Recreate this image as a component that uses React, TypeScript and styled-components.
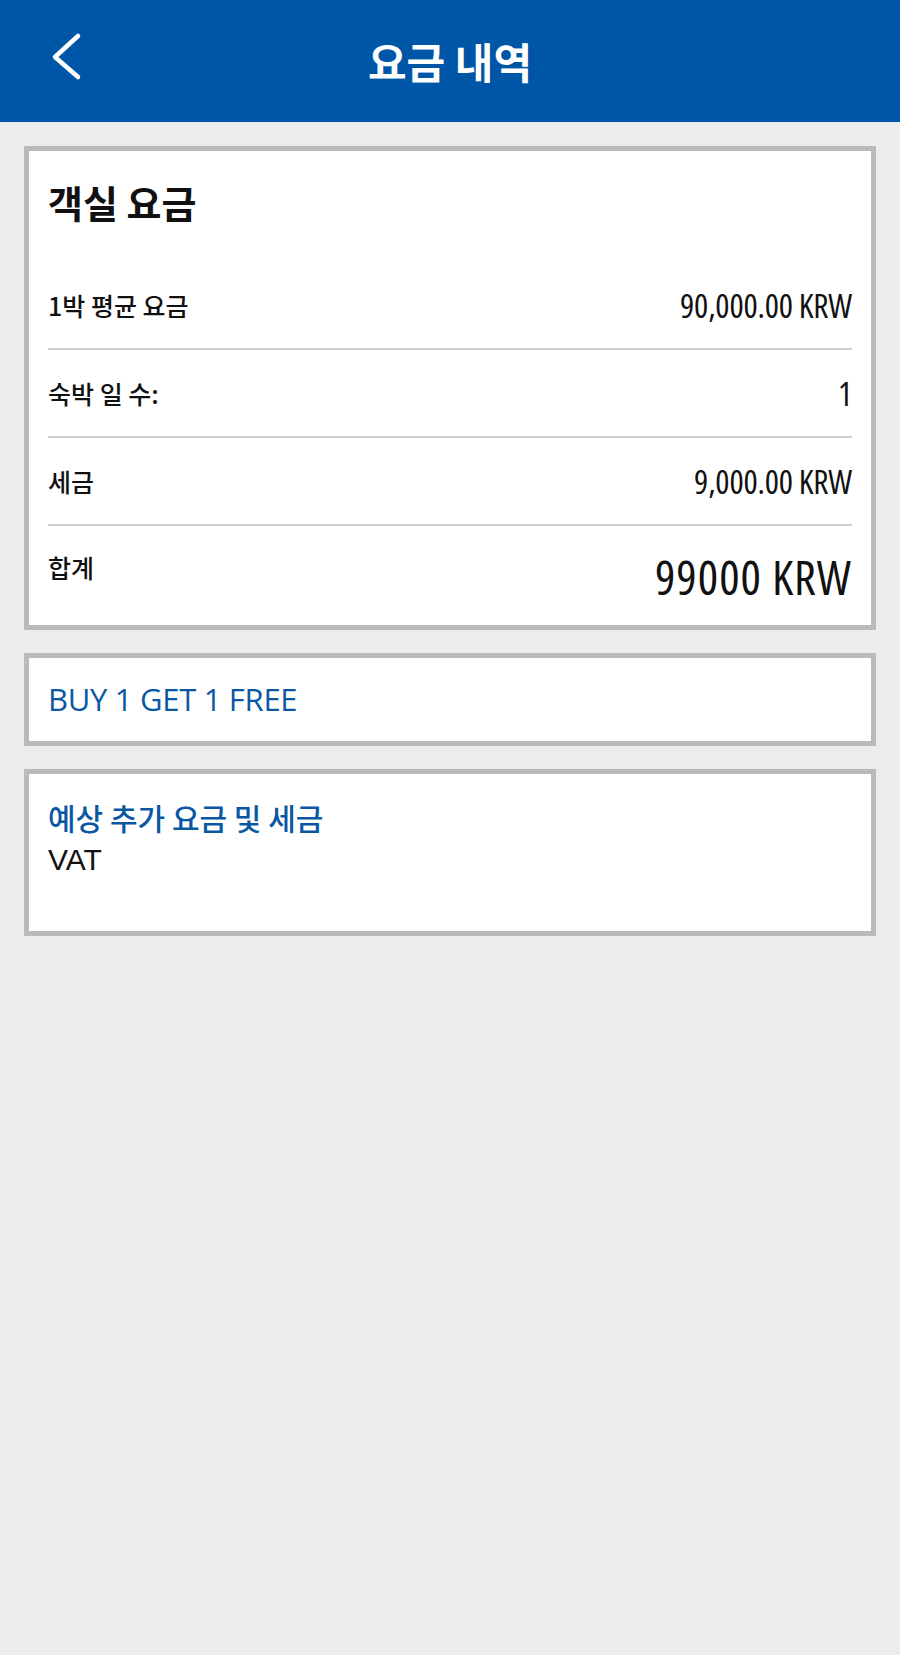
import React from "react";
import styled, { createGlobalStyle } from "styled-components";

const GlobalStyle = createGlobalStyle`
  html, body {
    margin: 0;
    padding: 0;
    background: #ececec;
  }
  body {
    font-family: "Noto Sans CJK KR", "Liberation Sans", sans-serif;
    -webkit-font-smoothing: antialiased;
  }
  * { box-sizing: border-box; }
`;

const Page = styled.div`
  min-height: 1655px;
  background: #ececec;
  display: flex;
  flex-direction: column;
`;

const Header = styled.header`
  height: 122px;
  background: #0056a6;
  display: grid;
  grid-template-columns: 1fr auto 1fr;
  align-items: center;
`;

const BackButton = styled.button`
  justify-self: start;
  align-self: start;
  margin: 32px 0 0 48px;
  padding: 0;
  border: 0;
  background: none;
  width: 34px;
  height: 50px;
  display: flex;
  cursor: pointer;
`;

const HeaderTitle = styled.h1`
  margin: 0;
  font-family: "Noto Sans CJK KR", sans-serif;
  font-size: 42px;
  font-weight: 700;
  line-height: 1.2;
  color: #ffffff;
`;

const Content = styled.main`
  padding: 24px;
  display: flex;
  flex-direction: column;
  gap: 23px;
`;

const Card = styled.section`
  background: #ffffff;
  border: 5px solid #bababa;
  padding: 0 19px;
`;

const CardTitle = styled.h2`
  margin: 0;
  padding-top: 30px;
  margin-bottom: 39px;
  font-family: "Noto Sans CJK KR", sans-serif;
  font-size: 38px;
  font-weight: 700;
  line-height: 42px;
  color: #111111;
`;

const Row = styled.div<{ $total?: boolean }>`
  display: flex;
  justify-content: space-between;
  align-items: ${(p) => (p.$total ? "flex-start" : "center")};
  height: ${(p) => (p.$total ? "99px" : "88px")};
  padding-top: ${(p) => (p.$total ? "26px" : "0")};
  border-bottom: ${(p) => (p.$total ? "none" : "2px solid #cfcfcf")};
`;

const Label = styled.span`
  font-family: "Noto Sans CJK KR", sans-serif;
  font-size: 25px;
  font-weight: 500;
  line-height: 1.2;
  color: #111111;
`;

const Value = styled.span<{ $big?: boolean }>`
  font-family: "Open Sans", "Liberation Sans", sans-serif;
  font-stretch: 75%;
  font-size: ${(p) => (p.$big ? "48px" : "33.5px")};
  line-height: ${(p) => (p.$big ? "50px" : "38px")};
  letter-spacing: ${(p) => (p.$big ? "1px" : "-0.2px")};
  color: #111111;
`;

const PromoCard = styled(Card)`
  padding: 22px 19px;
`;

const PromoText = styled.div`
  font-family: "Open Sans", "Liberation Sans", sans-serif;
  font-size: 31px;
  font-weight: 500;
  line-height: 39px;
  letter-spacing: -0.3px;
  color: #0a58a3;
`;

const ExtraCard = styled(Card)`
  padding: 26px 19px 55px;
`;

const ExtraTitle = styled.h3`
  margin: 0 0 10px;
  font-family: "Noto Sans CJK KR", sans-serif;
  font-size: 30px;
  font-weight: 500;
  line-height: 34px;
  color: #0a58a3;
`;

const ExtraText = styled.div`
  font-family: "Liberation Sans", sans-serif;
  font-size: 30px;
  line-height: 32px;
  color: #111111;
`;

const rows = [
  { label: "1박 평균 요금", value: "90,000.00 KRW" },
  { label: "숙박 일 수:", value: "1" },
  { label: "세금", value: "9,000.00 KRW" },
];

export default function App() {
  return (
    <Page>
      <GlobalStyle />
      <Header>
        <BackButton aria-label="뒤로">
          <svg width="34" height="50" viewBox="0 0 34 50" fill="none">
            <path
              d="M30 4 L7 25 L30 45"
              stroke="#ffffff"
              strokeWidth="4.5"
              strokeLinecap="round"
              strokeLinejoin="round"
            />
          </svg>
        </BackButton>
        <HeaderTitle>요금 내역</HeaderTitle>
        <span />
      </Header>
      <Content>
        <Card>
          <CardTitle>객실 요금</CardTitle>
          {rows.map((r) => (
            <Row key={r.label}>
              <Label>{r.label}</Label>
              <Value>{r.value}</Value>
            </Row>
          ))}
          <Row $total>
            <Label>합계</Label>
            <Value $big>99000 KRW</Value>
          </Row>
        </Card>
        <PromoCard>
          <PromoText>BUY 1 GET 1 FREE</PromoText>
        </PromoCard>
        <ExtraCard>
          <ExtraTitle>예상 추가 요금 및 세금</ExtraTitle>
          <ExtraText>VAT</ExtraText>
        </ExtraCard>
      </Content>
    </Page>
  );
}
